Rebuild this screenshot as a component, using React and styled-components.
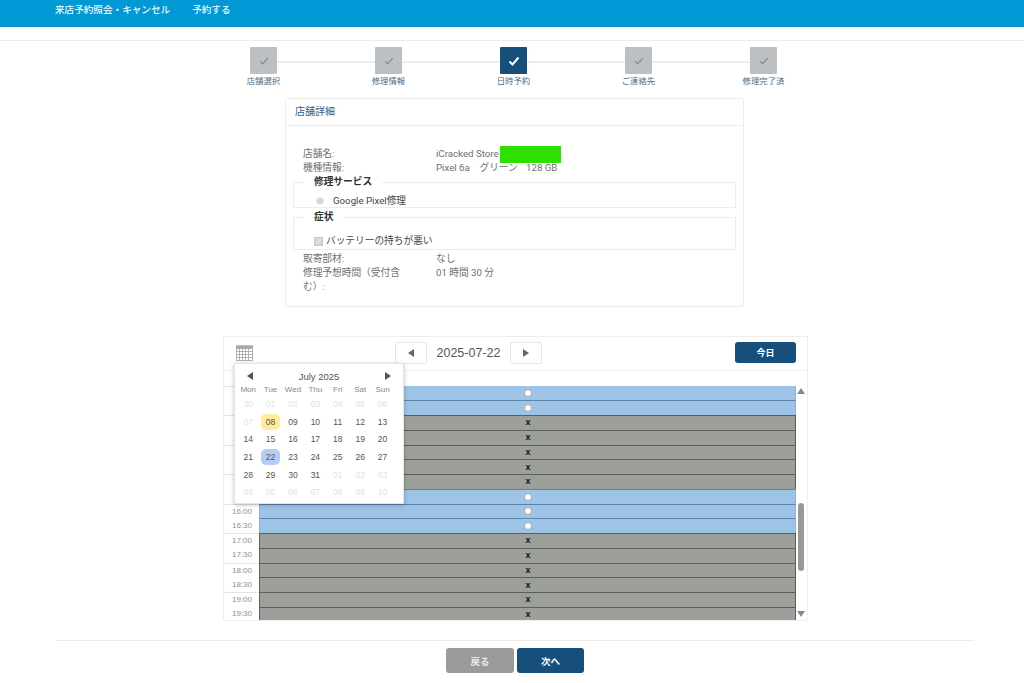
import React from "react";
import styled, { createGlobalStyle } from "styled-components";

const Global = createGlobalStyle`
  html, body { margin: 0; padding: 0; background: #fff; overflow: hidden; }
  body { font-family: Roboto, "Noto Sans CJK JP", sans-serif; color: #666; }
  * { box-sizing: border-box; }
`;

const Page = styled.div`
  width: 1024px; height: 683px; display: flex; flex-direction: column; overflow: hidden; position: relative;
`;
const TopBar = styled.header`
  height: 27px; background: #0099d5; border-bottom: 1px solid #0a8fc4; display: flex; gap: 22px;
  padding: 2px 0 0 55px; color: #eef8fc; font-size: 9.6px; line-height: 15px; font-weight: 500;
  font-family: "Noto Sans CJK JP", sans-serif; flex: none;
`;
const Divider = styled.div`
  height: 14px; border-bottom: 1px solid #ececec; flex: none;
`;
const Stepper = styled.ol`
  list-style: none; margin: 6px 0 0; padding: 0 0 0 201px; display: flex; flex: none; height: 51px;
`;
const Step = styled.li`
  width: 125px; display: flex; flex-direction: column; align-items: center; position: relative;
  &:not(:last-child)::after {
    content: ""; position: absolute; left: 76px; width: 99px; top: 14px; height: 2px; background: #e9eef3;
  }
`;
const StepBox = styled.div`
  width: 27px; height: 27px; border-radius: 1px; display: flex; align-items: center; justify-content: center;
  background: ${p => (p.$active ? "#164e7c" : "#bcc0c2")};
  color: ${p => (p.$active ? "#fff" : "#84888b")};
`;
const StepLabel = styled.span`
  font-size: 8.4px; line-height: 12px; margin-top: 0; color: #4d6d85; white-space: nowrap;
  font-family: "Noto Sans CJK JP", sans-serif;
`;
const Panel = styled.section`
  width: 459px; height: 209px; margin: 0 0 0 285px; border: 1px solid #ececec; border-radius: 2px; flex: none;
  font-family: Roboto, "Noto Sans CJK JP", sans-serif;
`;
const PanelTitle = styled.h2`
  margin: 0; height: 27px; border-bottom: 1px solid #ececec; padding: 0 9px; font-size: 10px; font-weight: 400;
  line-height: 25px; color: #2a5f88;
`;
const PanelBody = styled.div`
  padding: 21px 7px 0;
`;
const InfoRow = styled.div`
  display: grid; grid-template-columns: 133px 1fr; padding-left: 10px; font-size: 9.7px; line-height: 14px; color: #6f6f6f;
`;
const InfoLabel = styled.span`
  padding-right: 30px;
`;
const Redaction = styled.span`
  display: inline-block; width: 61px; height: 17px; margin: -3px 0 -3px 1px; background: #2ee000; vertical-align: middle;
`;
const Group = styled.fieldset`
  margin: 0; padding: 0; border: 1px solid #ececec; height: ${p => p.$h}px; width: 443px; min-width: 0;
  margin-top: ${p => p.$mt}px; margin-bottom: ${p => p.$mb}px;
`;
const GroupTitle = styled.legend`
  font-size: 9.7px; font-weight: 700; color: #333; line-height: 14px; position: relative; top: -1px;
  padding: 0 10px; margin-left: 10px; font-family: "Noto Sans CJK JP", sans-serif;
`;
const Choice = styled.div`
  display: flex; align-items: center; font-size: 9.7px; line-height: 14px; color: #444; height: 14px; margin-top: ${p => p.$mt}px;
  margin-left: ${p => p.$ml}px;
`;
const RadioDot = styled.span`
  width: 8px; height: 8px; border-radius: 50%; background: #d8d8d8; border: 1px solid #e4e4e4; margin-right: 9px;
`;
const CheckMark = styled.span`
  width: 9px; height: 9px; background: #d6d6d6; border: 1px solid #c8c8c8; margin-right: 3px; display: flex;
  align-items: center; justify-content: center; color: #f2f2f2;
`;
const Scheduler = styled.section`
  width: 585px; height: 285px; margin: 29px 0 0 223px; border: 1px solid #eeeeee; position: relative; flex: none;
  display: flex; flex-direction: column;
`;
const Toolbar = styled.div`
  height: 34px; display: flex; align-items: center; padding: 0 11px 2px 12px; flex: none; border-bottom: 1px solid #f0f0f0;
`;
const CalIcon = styled.svg`
  width: 17px; height: 16px; margin-right: 142px; flex: none;
`;
const NavButton = styled.button`
  width: 32px; height: 22px; background: #fff; border: 1px solid #e6e6e6; border-radius: 2px; padding: 0;
  display: flex; align-items: center; justify-content: center;
`;
const Arrow = styled.span`
  width: 0; height: 0; border-style: solid; display: block;
  border-width: ${p => p.$s}px 0 ${p => p.$s}px ${p => p.$s * 1.6}px;
  border-color: transparent transparent transparent ${p => p.$c};
  transform: ${p => (p.$left ? "rotate(180deg)" : "none")};
`;
const DateText = styled.span`
  width: 83px; text-align: center; font-family: "Liberation Sans", sans-serif; font-size: 12.5px; color: #555;
`;
const TodayButton = styled.button`
  margin-left: auto; width: 61px; height: 21px; background: #164e7c; border: none; border-radius: 3px; color: #fff;
  font-size: 9px; font-weight: 700; font-family: "Noto Sans CJK JP", sans-serif; padding: 0;
`;
const GridHead = styled.div`
  height: 14.6px; flex: none;
`;
const GridBody = styled.div`
  display: flex; flex: 1; min-height: 0; overflow: hidden;
`;
const TimeCol = styled.div`
  width: 35px; flex: none;
`;
const TimeGroup = styled.div`
  height: 29.5px; border-top: 1px solid #e4e4e4;
`;
const TimeLabel = styled.div`
  height: 14.25px; font-size: 8px; line-height: 14.25px; padding-left: 8px; color: #8f8f8f;
  font-family: "Liberation Sans", sans-serif;
`;
const Slots = styled.div`
  width: 536.5px; flex: none;
`;
const Slot = styled.div`
  height: 14.75px; display: flex; align-items: center; justify-content: center; padding-left: 1.5px;
  background: ${p => (p.$open ? "#9dc3e6" : "#9c9f9a")};
  border-top: ${p => (p.$first ? "none" : `1px solid ${p.$open ? "#5a84a8" : "#5b5f5e"}`)};
  border-left: 1px solid ${p => (p.$open ? "#8fb3d3" : "#5b5f5e")};
  border-right: 1px solid ${p => (p.$open ? "#8fb3d3" : "#5b5f5e")};
`;
const OpenMark = styled.span`
  width: 8px; height: 8px; border-radius: 50%; background: #fff; border: 1px solid #a9a9a9;
`;
const Closed = styled.span`
  font-family: "Liberation Sans", sans-serif; font-size: 9px; font-weight: 700; color: #111; line-height: 10px; margin-top: -1px;
`;
const ScrollTrack = styled.div`
  width: 11px; flex: none; display: flex; flex-direction: column; align-items: center; padding-top: 2px;
`;
const ArrowUp = styled.span`
  width: 0; height: 0; border-style: solid; border-width: 0 4px 6px; border-color: transparent transparent #888; display: block;
`;
const ArrowDown = styled(ArrowUp)`
  border-width: 6px 4px 0; border-color: #888 transparent transparent; margin-top: 40px;
`;
const Thumb = styled.div`
  width: 6px; height: 68px; background: #999; border-radius: 3px; margin-top: 109px;
`;
const Popup = styled.div`
  position: absolute; left: 10px; top: 26px; width: 170px; height: 141px; background: #fff; border: 1px solid #e4e4e4;
  box-shadow: 0 1px 4px rgba(0,0,0,.25); padding: 4px 4px 0 2px; font-family: "Liberation Sans", sans-serif; z-index: 2;
`;
const PopupHead = styled.div`
  display: flex; align-items: center; justify-content: space-between; height: 16px; padding: 0 8px 0 10px;
  font-size: 9.5px; color: #555;
`;
const Weekdays = styled.div`
  display: grid; grid-template-columns: repeat(7, 22.4px); height: 12px; font-size: 8px; line-height: 12px;
  text-align: center; color: #888;
`;
const Days = styled.div`
  display: grid; grid-template-columns: repeat(7, 22.4px); grid-auto-rows: 17.7px; font-size: 8.5px; text-align: center;
`;
const Day = styled.div`
  display: flex; align-items: center; justify-content: center; border-radius: 5px; margin: 0 1.5px; height: 16px;
  color: ${p => (p.$muted ? "#e2e2e2" : "#555")};
  background: ${p => (p.$today ? "#ffeb99" : p.$sel ? "#b5cdf5" : "transparent")};
`;
const Footer = styled.footer`
  margin: 19px 50px 0 56px; border-top: 1px solid #ececec; padding-top: 7px; display: flex; justify-content: center; gap: 3px; flex: none;
`;
const ActionButton = styled.button`
  width: ${p => p.$w}px; height: 25px; border: none; border-radius: 3px; color: ${p => (p.$primary ? "#fff" : "#e8e8e8")};
  background: ${p => (p.$primary ? "#164e7c" : "#999b9d")}; font-size: 9.5px; font-weight: 700;
  font-family: "Noto Sans CJK JP", sans-serif; padding: 0;
`;

const Tick = ({ size, w }) => (
  <svg width={size} height={size} viewBox="0 0 12 12" fill="none" stroke="currentColor" strokeWidth={w}>
    <path d="M1.5 6.5 L4.5 9.5 L10.5 2.5" />
  </svg>
);

const steps = ["店舗選択", "修理情報", "日時予約", "ご連絡先", "修理完了済"];
const times = [];
for (let h = 12; h < 20; h++) times.push([`${h}:00`, `${h}:30`]);
const open = [1, 1, 0, 0, 0, 0, 0, 1, 1, 1, 0, 0, 0, 0, 0, 0];
const weekdays = ["Mon", "Tue", "Wed", "Thu", "Fri", "Sat", "Sun"];
const days = [
  ["30", 1], ["01", 1], ["02", 1], ["03", 1], ["04", 1], ["05", 1], ["06", 1],
  ["07", 1], ["08", 0, "t"], ["09"], ["10"], ["11"], ["12"], ["13"],
  ["14"], ["15"], ["16"], ["17"], ["18"], ["19"], ["20"],
  ["21"], ["22", 0, "s"], ["23"], ["24"], ["25"], ["26"], ["27"],
  ["28"], ["29"], ["30"], ["31"], ["01", 1], ["02", 1], ["03", 1],
  ["04", 1], ["05", 1], ["06", 1], ["07", 1], ["08", 1], ["09", 1], ["10", 1],
];

export default function App() {
  return (
    <Page>
      <Global />
      <TopBar>
        <span>来店予約照会・キャンセル</span>
        <span>予約する</span>
      </TopBar>
      <Divider />
      <Stepper>
        {steps.map((s, i) => (
          <Step key={s}>
            <StepBox $active={i === 2}><Tick size={i === 2 ? 12 : 10} w={i === 2 ? 2 : 1.5} /></StepBox>
            <StepLabel>{s}</StepLabel>
          </Step>
        ))}
      </Stepper>
      <Panel>
        <PanelTitle>店舗詳細</PanelTitle>
        <PanelBody>
          <InfoRow><InfoLabel>店舗名:</InfoLabel><span>iCracked Store<Redaction /></span></InfoRow>
          <InfoRow><InfoLabel>機種情報:</InfoLabel><span>Pixel 6a　グリーン{"\u2002\u2004"}128 GB</span></InfoRow>
          <Group $h={33} $mt={0} $mb={0}>
            <GroupTitle>修理サービス</GroupTitle>
            <Choice $mt={5} $ml={22}><RadioDot />Google Pixel修理</Choice>
          </Group>
          <Group $h={40} $mt={2} $mb={2}>
            <GroupTitle>症状</GroupTitle>
            <Choice $mt={10} $ml={20}><CheckMark><Tick size={7} w={1.5} /></CheckMark>バッテリーの持ちが悪い</Choice>
          </Group>
          <InfoRow><InfoLabel>取寄部材:</InfoLabel><span>なし</span></InfoRow>
          <InfoRow><InfoLabel>修理予想時間（受付含む）:</InfoLabel><span>01 時間 30 分</span></InfoRow>
        </PanelBody>
      </Panel>
      <Scheduler>
        <Toolbar>
          <CalIcon viewBox="0 0 17 16" fill="none" stroke="#a2a2a2" strokeWidth="0.8">
            <rect x="0.5" y="1" width="16" height="14.5" />
            <rect x="0.5" y="1" width="16" height="2.5" fill="#aaa" />
            <path d="M3.5 3.5V15.5M6.5 3.5V15.5M9.5 3.5V15.5M12.5 3.5V15.5M0.5 6.5H16.5M0.5 9.5H16.5M0.5 12.5H16.5" />
          </CalIcon>
          <NavButton><Arrow $left $s={4} $c="#666" /></NavButton>
          <DateText>2025-07-22</DateText>
          <NavButton><Arrow $s={4} $c="#666" /></NavButton>
          <TodayButton>今日</TodayButton>
        </Toolbar>
        <GridHead />
        <GridBody>
          <TimeCol>
            {times.map((g, i) => (
              <TimeGroup key={g[0]}>
                {i >= 4 && g.map(t => <TimeLabel key={t}>{t}</TimeLabel>)}
              </TimeGroup>
            ))}
          </TimeCol>
          <Slots>
            {open.map((o, i) => (
              <Slot key={i} $open={o} $first={i === 0}>{o ? <OpenMark /> : <Closed>x</Closed>}</Slot>
            ))}
          </Slots>
          <ScrollTrack>
            <ArrowUp />
            <Thumb />
            <ArrowDown />
          </ScrollTrack>
        </GridBody>
        <Popup>
          <PopupHead>
            <Arrow $left $s={4} $c="#555" />
            <span>July 2025</span>
            <Arrow $s={4} $c="#555" />
          </PopupHead>
          <Weekdays>{weekdays.map(d => <span key={d}>{d}</span>)}</Weekdays>
          <Days>
            {days.map(([d, m, k], i) => (
              <Day key={i} $muted={m} $today={k === "t"} $sel={k === "s"}>{d}</Day>
            ))}
          </Days>
        </Popup>
      </Scheduler>
      <Footer>
        <ActionButton $w={68}>戻る</ActionButton>
        <ActionButton $w={67} $primary>次へ</ActionButton>
      </Footer>
    </Page>
  );
}
